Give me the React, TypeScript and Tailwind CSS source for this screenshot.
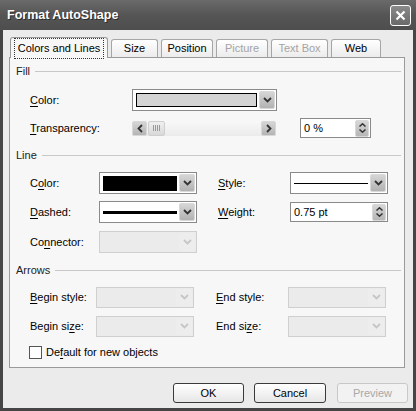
import React from 'react';

// accelerator-key label: underlines one letter
const Acc = ({ t, i }: { t: string; i: number }) => (
  <>
    {t.slice(0, i)}
    <span className="underline decoration-1 underline-offset-[2px]">{t[i]}</span>
    {t.slice(i + 1)}
  </>
);

const Chevron = ({ dim = false }: { dim?: boolean }) => (
  <svg width="9" height="6" viewBox="0 0 9 6">
    <path d="M1 1L4.5 4.5L8 1" fill="none" stroke={dim ? '#c6c6c6' : '#333333'} strokeWidth="1.8" />
  </svg>
);

const DropBtn = ({ dim = false }: { dim?: boolean }) => (
  <div
    className={`flex w-[16px] items-center justify-center rounded-[2px] ${
      dim ? 'bg-[#ededed]' : 'border border-[#d8d8d8] bg-gradient-to-b from-[#d6d6d6] to-[#b2b2b2]'
    }`}
  >
    <Chevron dim={dim} />
  </div>
);

interface ComboProps {
  className: string;
  disabled?: boolean;
  children?: React.ReactNode;
}

const Combo = ({ className, disabled = false, children }: ComboProps) => (
  <div
    className={`flex border p-[1px] ${
      disabled ? 'border-[#cfcfcf] bg-[#ebebeb]' : 'border-[#8a8a8a] bg-white'
    } ${className}`}
  >
    <div className="flex min-w-0 flex-1 items-center pl-[2px] pr-[2px]">{children}</div>
    <DropBtn dim={disabled} />
  </div>
);

const SpinArrows = () => (
  <div className="flex h-[17px] w-[14px] flex-col items-center justify-center gap-[2px] rounded-[2px] border border-[#d8d8d8] bg-gradient-to-b from-[#d6d6d6] to-[#b6b6b6]">
    <svg width="7" height="4" viewBox="0 0 7 4">
      <path d="M0.5 3.5L3.5 0.8L6.5 3.5" fill="none" stroke="#333" strokeWidth="1.5" />
    </svg>
    <svg width="7" height="4" viewBox="0 0 7 4">
      <path d="M0.5 0.5L3.5 3.2L6.5 0.5" fill="none" stroke="#333" strokeWidth="1.5" />
    </svg>
  </div>
);

const Spin = ({ className, value }: { className: string; value: string }) => (
  <div className={`flex h-[20px] items-center border border-[#8a8a8a] bg-white pl-[3px] pr-[1px] ${className}`}>
    <span className="flex-1">{value}</span>
    <SpinArrows />
  </div>
);

const ArrowBtn = ({ dir }: { dir: 'l' | 'r' }) => (
  <div className="flex h-[15px] w-[15px] items-center justify-center rounded-[2px] border border-[#d8d8d8] bg-gradient-to-b from-[#d6d6d6] to-[#b4b4b4]">
    <svg width="6" height="9" viewBox="0 0 6 9">
      <path
        d={dir === 'l' ? 'M5 1L1.5 4.5L5 8' : 'M1 1L4.5 4.5L1 8'}
        fill="none"
        stroke="#333"
        strokeWidth="1.8"
      />
    </svg>
  </div>
);

const Scroller = () => (
  <div className="flex h-[15px] w-[144px] items-center bg-gradient-to-b from-[#f8f8f8] to-[#ebebeb]">
    <ArrowBtn dir="l" />
    <div className="ml-[1px] flex h-[15px] w-[17px] items-center justify-center gap-[1px] rounded-[2px] border border-[#cfcfcf] bg-gradient-to-b from-[#f0f0f0] to-[#d8d8d8]">
      <div className="h-[6px] w-[1px] bg-[#9a9a9a]" />
      <div className="h-[6px] w-[1px] bg-[#9a9a9a]" />
      <div className="h-[6px] w-[1px] bg-[#9a9a9a]" />
      <div className="h-[6px] w-[1px] bg-[#9a9a9a]" />
    </div>
    <div className="flex-1" />
    <ArrowBtn dir="r" />
  </div>
);

const Section = ({ title, className }: { title: string; className: string }) => (
  <div className={`flex h-[14px] items-center pl-[6px] pr-[3px] ${className}`}>
    <span className="text-[#222]">{title}</span>
    <div className="ml-[5px] h-[1px] flex-1 bg-[#c8c8c8]" />
  </div>
);

const tabs = [
  { label: 'Size', w: 'w-[47px]', off: false },
  { label: 'Position', w: 'w-[52px]', off: false },
  { label: 'Picture', w: 'w-[52px]', off: true },
  { label: 'Text Box', w: 'w-[57px]', off: true },
  { label: 'Web', w: 'w-[50px]', off: false },
];

export default function App() {
  return (
    <div className="flex h-[411px] w-[416px] flex-col bg-[#454545] font-['Liberation_Sans',Arial,sans-serif] text-[11px] text-black">
      {/* title bar */}
      <div className="flex h-[30px] items-center justify-between bg-gradient-to-b from-[#6a6a6a] via-[#555555] to-[#4e4e4e] pl-[7px] pr-[5px]">
        <span className="text-[12.5px] font-bold text-white [text-shadow:1px_1px_0_#2a2a2a]">Format AutoShape</span>
        <div className="mt-[1px] flex h-[21px] w-[21px] items-center justify-center rounded-[3px] border border-white bg-gradient-to-b from-[#8a8a8a] to-[#6a6a6a]">
          <svg width="11" height="11" viewBox="0 0 11 11">
            <path d="M1.5 1.5L9.5 9.5M9.5 1.5L1.5 9.5" stroke="white" strokeWidth="2.2" />
          </svg>
        </div>
      </div>

      {/* dialog body */}
      <div className="mx-[3px] mb-[3px] flex flex-1 flex-col bg-[#ebebeb] pl-[6px] pt-[7px]">
        {/* tabs */}
        <div className="relative z-10 -mb-[1px] flex h-[21px] items-end gap-[3px] pl-[1px]">
          <div className="flex h-[21px] w-[98px] items-center justify-center rounded-t-[3px] border border-b-0 border-[#9a9a9a] bg-[#f7f7f7] pt-[1px]">
            <span className="border border-dotted border-[#333] px-[3px] py-[1px]">Colors and Lines</span>
          </div>
          {tabs.map((tab) => (
            <div
              key={tab.label}
              className={`mb-[1px] flex h-[18px] items-center justify-center rounded-t-[3px] border border-b-0 border-[#a6a6a6] bg-gradient-to-b from-white to-[#ececec] ${tab.w} ${
                tab.off ? 'text-[#a4a4a4]' : ''
              }`}
            >
              {tab.label}
            </div>
          ))}
        </div>

        {/* tab panel */}
        <div className="flex h-[311px] w-[396px] flex-col border border-[#9a9a9a] bg-[#f7f7f7]">
          <Section title="Fill" className="mt-[6px]" />

          <div className="mt-[11px] flex h-[22px] items-center pl-[20px]">
            <span className="w-[102px]">
              <Acc t="Color:" i={0} />
            </span>
            <Combo className="h-[22px] w-[145px]">
              <div className="h-[14px] w-full border-[1.5px] border-black bg-[#d4d4d4]" />
            </Combo>
          </div>

          <div className="mt-[6px] flex h-[22px] items-center pl-[20px]">
            <span className="w-[102px]">
              <Acc t="Transparency:" i={0} />
            </span>
            <Scroller />
            <Spin className="ml-[24px] w-[71px]" value="0 %" />
          </div>

          <Section title="Line" className="mt-[9px]" />

          <div className="mt-[10px] flex h-[22px] items-center pl-[20px]">
            <span className="w-[69px]">
              <Acc t="Color:" i={1} />
            </span>
            <Combo className="h-[22px] w-[98px]">
              <div className="h-[15px] w-full bg-black" />
            </Combo>
            <span className="ml-[21px] w-[72px]">
              <Acc t="Style:" i={0} />
            </span>
            <Combo className="h-[22px] w-[98px]">
              <div className="h-[1px] w-full bg-black" />
            </Combo>
          </div>

          <div className="mt-[7px] flex h-[22px] items-center pl-[20px]">
            <span className="w-[69px]">
              <Acc t="Dashed:" i={0} />
            </span>
            <Combo className="h-[22px] w-[98px]">
              <div className="h-[3px] w-full bg-black" />
            </Combo>
            <span className="ml-[21px] w-[72px]">
              <Acc t="Weight:" i={0} />
            </span>
            <Spin className="w-[98px]" value="0.75 pt" />
          </div>

          <div className="mt-[8px] flex h-[22px] items-center pl-[20px]">
            <span className="w-[69px]">
              <Acc t="Connector:" i={2} />
            </span>
            <Combo className="h-[22px] w-[98px]" disabled />
          </div>

          <Section title="Arrows" className="mt-[10px]" />

          <div className="mt-[9px] flex h-[22px] items-center pl-[20px]">
            <span className="w-[66px]">
              <Acc t="Begin style:" i={0} />
            </span>
            <Combo className="h-[21px] w-[98px]" disabled />
            <span className="ml-[22px] w-[72px]">
              <Acc t="End style:" i={0} />
            </span>
            <Combo className="h-[21px] w-[98px]" disabled />
          </div>

          <div className="mt-[7px] flex h-[22px] items-center pl-[20px]">
            <span className="w-[66px]">
              <Acc t="Begin size:" i={8} />
            </span>
            <Combo className="h-[21px] w-[98px]" disabled />
            <span className="ml-[22px] w-[72px]">
              <Acc t="End size:" i={6} />
            </span>
            <Combo className="h-[21px] w-[98px]" disabled />
          </div>

          <div className="mt-[8px] flex h-[14px] items-center pl-[19px]">
            <div className="h-[13px] w-[13px] border border-[#555] bg-white" />
            <span className="ml-[4px]">
              <Acc t="Default for new objects" i={2} />
            </span>
          </div>
        </div>

        {/* buttons */}
        <div className="mt-[15px] flex gap-[10px] pl-[164px]">
          <button className="h-[20px] w-[71px] rounded-[3px] border border-[#3a3a3a] bg-gradient-to-b from-white to-[#e6e6e6]">
            OK
          </button>
          <button className="h-[20px] w-[72px] rounded-[3px] border border-[#3a3a3a] bg-gradient-to-b from-white to-[#e6e6e6]">
            Cancel
          </button>
          <button className="ml-[1px] h-[20px] w-[71px] rounded-[3px] border border-[#c8c8c8] bg-[#f2f2f2] text-[#a8a8a8]">
            Preview
          </button>
        </div>
      </div>
    </div>
  );
}
